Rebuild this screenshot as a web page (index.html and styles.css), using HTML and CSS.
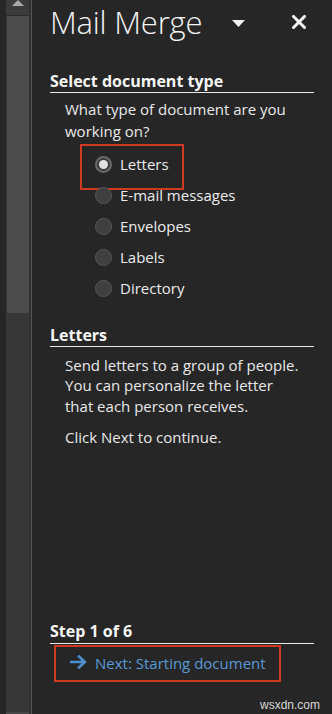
FILE: index.html
```html
<!DOCTYPE html>
<html lang="en">
<head>
<meta charset="utf-8">
<title>Mail Merge</title>
<link rel="stylesheet" href="styles.css">
</head>
<body>
<div class="app">
  <div class="scrollbar">
    <div class="sb-gap"></div>
    <div class="sb-track">
      <div class="sb-btn">
        <svg class="sb-arrow" width="12" height="6" viewBox="0 0 12 6"><polygon points="0,6 12,6 6,0" fill="#a9a9a9"/></svg>
      </div>
      <div class="sb-thumb"></div>
      <div class="sb-rest"></div>
      <div class="sb-btn-bottom"></div>
    </div>
    <div class="sb-line"></div>
  </div>

  <div class="pane">
    <header class="pane-head">
      <h1 class="title">Mail Merge</h1>
      <div class="head-tools">
        <span class="tool tool-menu">
          <svg width="13" height="7" viewBox="0 0 13 7"><polygon points="0,0 13,0 6.5,7" fill="#f2f2f2"/></svg>
        </span>
        <span class="tool tool-close">
          <svg width="14" height="14" viewBox="0 0 14 14"><path d="M1.5 1.5 L12.5 12.5 M12.5 1.5 L1.5 12.5" stroke="#f4f4f4" stroke-width="3" stroke-linecap="square"/></svg>
        </span>
      </div>
    </header>

    <section class="section">
      <h2 class="sec-title">Select document type</h2>
      <p class="text prompt">What type of document are you working on?</p>
      <ul class="options">
        <li class="opt opt-marked"><span class="radio radio-on"></span><span class="opt-label">Letters</span></li>
        <li class="opt"><span class="radio"></span><span class="opt-label">E-mail messages</span></li>
        <li class="opt"><span class="radio"></span><span class="opt-label">Envelopes</span></li>
        <li class="opt"><span class="radio"></span><span class="opt-label">Labels</span></li>
        <li class="opt"><span class="radio"></span><span class="opt-label">Directory</span></li>
      </ul>
    </section>

    <section class="section section-desc">
      <h2 class="sec-title">Letters</h2>
      <p class="text desc">Send letters to a group of people.<br>You can personalize the letter<br>that each person receives.</p>
      <p class="text desc desc-next">Click Next to continue.</p>
    </section>

    <section class="section section-step">
      <h2 class="sec-title">Step 1 of 6</h2>
      <div class="next-link">
        <svg class="next-arrow" width="17" height="14" viewBox="0 0 17 14"><path d="M1 7 H14.5 M9 1.5 L14.8 7 L9 12.5" fill="none" stroke="#4e8fd0" stroke-width="2.6" stroke-linecap="square" stroke-linejoin="miter"/></svg>
        <span class="next-label">Next: Starting document</span>
      </div>
    </section>
  </div>

  <span class="watermark">wsxdn.com</span>
</div>
</body>
</html>
```
FILE: styles.css
```css
* { box-sizing: border-box; }

html, body {
  margin: 0;
  padding: 0;
  background: #262626;
}

body {
  font-family: "Open Sans", "Noto Sans", sans-serif;
  color: #f0f0f0;
}

.app {
  position: relative;
  display: flex;
  height: 714px;
  overflow: hidden;
}

/* scrollbar strip */
.scrollbar {
  flex: none;
  width: 32px;
  display: flex;
}
.sb-gap {
  width: 6px;
  background: #262626;
}
.sb-track {
  width: 24px;
  display: flex;
  flex-direction: column;
  background: #373737;
  border-right: 1px solid #303030;
}
.sb-btn {
  height: 16px;
  flex: none;
  background: #3b3b3b;
  border-bottom: 1px solid #2b2b2b;
  display: flex;
  justify-content: center;
  align-items: flex-start;
  padding-left: 1px;
}
.sb-arrow { display: block; }
.sb-thumb {
  height: 297px;
  flex: none;
  margin-left: 1px;
  background: #4b4b4b;
}
.sb-rest { flex: 1; }
.sb-btn-bottom {
  height: 2px;
  background: #464646;
}
.sb-line {
  width: 2px;
  background: #565656;
  border-left: 1px solid #2e2e2e;
}

/* pane */
.pane {
  flex: 1;
  display: flex;
  flex-direction: column;
  padding: 0 18px 32px 18px;
}

.pane-head {
  display: flex;
  align-items: flex-start;
  justify-content: space-between;
  padding-top: 2px;
  height: 42px;
}
.title {
  margin: 0;
  font-size: 31px;
  line-height: 40px;
  font-weight: 300;
  color: #f4f4f4;
  letter-spacing: -0.2px;
}
.head-tools {
  display: flex;
  align-items: center;
  padding-top: 13px;
  margin-right: 8px;
}
.tool { display: flex; align-items: center; justify-content: center; }
.tool svg { display: block; }
.tool-menu { margin-right: 47px; padding-top: 2px; }

.section { display: flex; flex-direction: column; }

.sec-title {
  margin: 29px 0 0 0;
  font-size: 16px;
  font-weight: 700;
  line-height: 20px;
  color: #f7f7f7;
  padding-bottom: 1px;
  border-bottom: 1px solid #e8e8e8;
}

.text {
  margin: 0;
  padding-left: 15px;
  font-size: 15px;
  color: #e9e9e9;
}
.prompt {
  margin-top: 6px;
  line-height: 21.5px;
}

.options {
  list-style: none;
  margin: 6.5px 0 0 0;
  padding: 0;
}
.opt {
  position: relative;
  display: flex;
  align-items: center;
  height: 31px;
  padding-left: 45px;
  font-size: 15px;
  color: #ececec;
}
.opt-label { line-height: 31px; padding-top: 1px; }
.radio {
  flex: none;
  width: 17px;
  height: 17px;
  margin-right: 8px;
  border-radius: 50%;
  background: #3f3f3f;
  border: 1px solid #575757;
  display: flex;
  align-items: center;
  justify-content: center;
}
.radio-on {
  border: 2px solid #6a6a6a;
  background: #3c3c3c;
}
.radio-on::before {
  content: "";
  width: 9px;
  height: 9px;
  border-radius: 50%;
  background: #e2e2e2;
}
.opt-marked::after {
  content: "";
  position: absolute;
  left: 30px;
  top: -5px;
  width: 100px;
  height: 42px;
  border: 2px solid #cf3a22;
}

.section-desc .sec-title { margin-top: 21px; }
.desc {
  margin-top: 8px;
  line-height: 20.5px;
}
.desc-next { margin-top: 11px; }

.section-step { margin-top: auto; }
.section-step .sec-title { margin-top: 0; padding-bottom: 2px; }

.next-link {
  align-self: flex-start;
  display: flex;
  align-items: center;
  margin: 1px 0 0 4px;
  height: 37px;
  padding: 0 13px 0 14px;
  border: 2px solid #cf3a22;
}
.next-arrow { display: block; flex: none; margin-right: 8px; margin-top: -4px; }
.next-label {
  font-size: 15px;
  line-height: 33px;
  color: #5a9ad6;
}

.watermark {
  position: absolute;
  right: 12px;
  bottom: 2px;
  font-family: "Liberation Sans", Arial, sans-serif;
  font-size: 12px;
  color: #d8d8d8;
}
```
